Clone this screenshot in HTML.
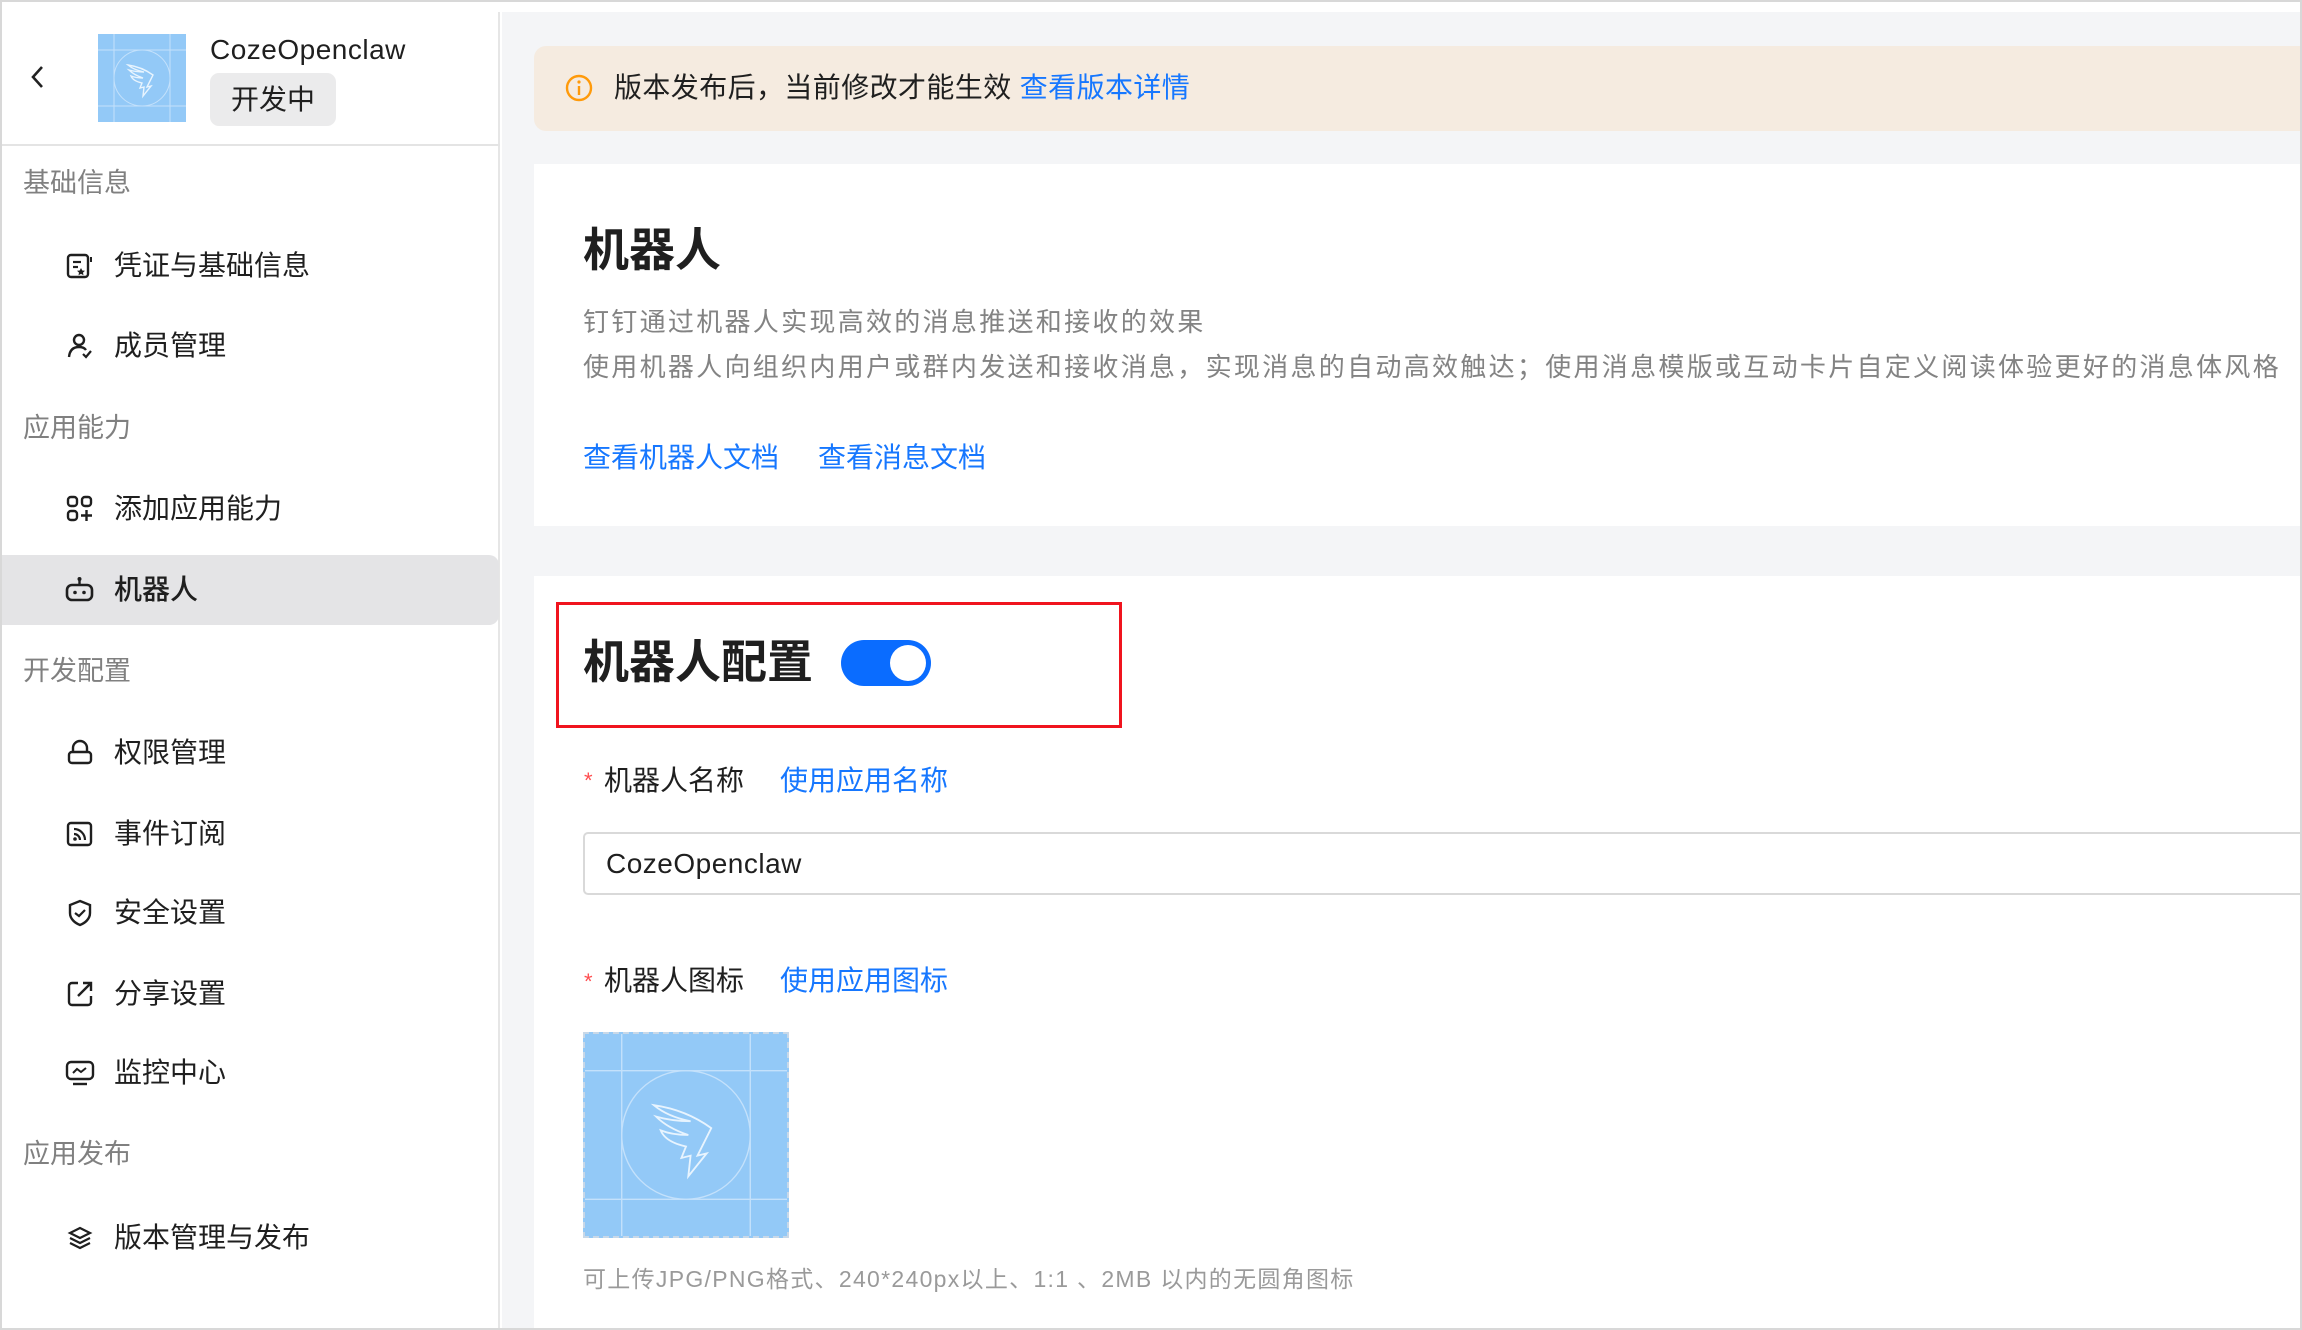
<!DOCTYPE html>
<html><head><meta charset="utf-8"><style>
*{margin:0;padding:0;box-sizing:border-box}
body{width:2302px;height:1330px;overflow:hidden;background:#fff;font-family:"Liberation Sans","Noto Sans CJK SC",sans-serif;position:relative;color:#1f1f1f}
.a{position:absolute;white-space:nowrap}
.frame{position:absolute;left:0;top:0;width:2302px;height:1330px;border:2px solid #d8d8d8;border-right-width:2px}
.side{position:absolute;left:2px;top:12px;width:498px;height:1316px;background:#fff;border-right:2px solid #e6e6e6}
.main{position:absolute;left:502px;top:12px;width:1798px;height:1316px;background:#f4f5f7;overflow:hidden}
.sec{position:absolute;left:21px;font-size:27px;color:#808080;line-height:1}
.it{position:absolute;left:112px;font-size:28px;color:#1f1f1f;line-height:1}
.ic{position:absolute;left:63px;width:30px;height:30px}
.blue{color:#1677ff}
</style></head><body>
<div class="frame"></div>
<div class="side">
  <svg class="a" style="left:26px;top:52px" width="20" height="26" viewBox="0 0 20 26"><path d="M14 3 L5 13 L14 23" fill="none" stroke="#222" stroke-width="2.6"/></svg>
  <div class="a" style="left:96px;top:22px;width:88px;height:88px;background:#93c9f7;overflow:hidden">
    <svg width="88" height="88" viewBox="0 0 88 88"><g stroke="#c4e1fb" stroke-width="1" fill="none"><line x1="16" y1="0" x2="16" y2="88"/><line x1="72" y1="0" x2="72" y2="88"/><line x1="0" y1="16" x2="88" y2="16"/><line x1="0" y1="72" x2="88" y2="72"/><circle cx="44" cy="44" r="28"/></g><path d="M30 31 Q44 33 55 41 L49 53 L53 52 L45 62 L46 53 L42 54 L44 49 Q35 47 33 42 Q38 44 45 44 Q36 41 31 36 Q38 38 46 38 Q36 36 30 31Z" fill="none" stroke="#e8f4fe" stroke-width="1.4"/></svg>
  </div>
  <div class="a" style="left:208px;top:22px;font-size:28px;color:#1f1f1f;letter-spacing:0.5px">CozeOpenclaw</div>
  <div class="a" style="left:208px;top:61px;width:126px;height:53px;background:#ebebec;border-radius:9px;font-size:28px;line-height:53px;text-align:center;color:#1f1f1f">开发中</div>
  <div class="a" style="left:0;top:132px;width:498px;height:2px;background:#e4e4e4"></div>

  <div class="sec" style="top:158px">基础信息</div>
  <svg class="ic" style="top:239px" viewBox="0 0 30 30"><rect x="3" y="4" width="20" height="22" rx="3" fill="none" stroke="#1f1f1f" stroke-width="2.4"/><line x1="8" y1="11" x2="16" y2="11" stroke="#1f1f1f" stroke-width="2.2"/><line x1="8" y1="16" x2="13" y2="16" stroke="#1f1f1f" stroke-width="2.2"/><path d="M16 17l1.3 2.5 2.7.3-2 1.8.5 2.6-2.5-1.3-2.5 1.3.5-2.6-2-1.8 2.7-.3z" fill="#1f1f1f"/><line x1="26" y1="6" x2="26" y2="11" stroke="#1f1f1f" stroke-width="2"/></svg>
  <div class="it" style="top:240px">凭证与基础信息</div>
  <svg class="ic" style="top:319px" viewBox="0 0 30 30"><circle cx="14" cy="9" r="5" fill="none" stroke="#1f1f1f" stroke-width="2.4"/><path d="M4 26 Q5 16 14 16 Q19 16 21 19" fill="none" stroke="#1f1f1f" stroke-width="2.4"/><path d="M18 23l3 3 5-6" fill="none" stroke="#1f1f1f" stroke-width="2.2"/></svg>
  <div class="it" style="top:320px">成员管理</div>

  <div class="sec" style="top:403px">应用能力</div>
  <svg class="ic" style="top:482px" viewBox="0 0 30 30"><rect x="3" y="3" width="9" height="9" rx="3" fill="none" stroke="#1f1f1f" stroke-width="2.4"/><rect x="17" y="3" width="9" height="9" rx="3" fill="none" stroke="#1f1f1f" stroke-width="2.4"/><rect x="3" y="17" width="9" height="9" rx="3" fill="none" stroke="#1f1f1f" stroke-width="2.4"/><path d="M21.5 16v11M16 21.5h11" stroke="#1f1f1f" stroke-width="2.4"/></svg>
  <div class="it" style="top:483px">添加应用能力</div>
  <div class="a" style="left:0;top:543px;width:497px;height:70px;background:#e4e4e6;border-radius:0 10px 10px 0"></div>
  <svg class="ic" style="top:563px" viewBox="0 0 30 30"><rect x="2" y="10" width="25" height="15" rx="5" fill="none" stroke="#1f1f1f" stroke-width="2.6"/><line x1="14.5" y1="4" x2="14.5" y2="10" stroke="#1f1f1f" stroke-width="2.4"/><circle cx="14.5" cy="4" r="2" fill="#1f1f1f"/><circle cx="10" cy="17.5" r="1.8" fill="#1f1f1f"/><circle cx="19" cy="17.5" r="1.8" fill="#1f1f1f"/></svg>
  <div class="it" style="top:564px;font-weight:500">机器人</div>

  <div class="sec" style="top:646px">开发配置</div>
  <svg class="ic" style="top:726px" viewBox="0 0 30 30"><path d="M8 14V10a7 7 0 0 1 14 0v4" fill="none" stroke="#1f1f1f" stroke-width="2.4"/><rect x="4" y="14" width="22" height="11" rx="3" fill="none" stroke="#1f1f1f" stroke-width="2.4"/></svg>
  <div class="it" style="top:727px">权限管理</div>
  <svg class="ic" style="top:807px" viewBox="0 0 30 30"><rect x="3" y="4" width="23" height="22" rx="3" fill="none" stroke="#1f1f1f" stroke-width="2.4"/><path d="M9 10a11 11 0 0 1 11 11M9 15a6 6 0 0 1 6 6" fill="none" stroke="#1f1f1f" stroke-width="2.2"/><circle cx="10" cy="20" r="1.8" fill="#1f1f1f"/></svg>
  <div class="it" style="top:808px">事件订阅</div>
  <svg class="ic" style="top:886px" viewBox="0 0 30 30"><path d="M15 3l10 4v8c0 6-5 10-10 12C10 25 5 21 5 15V7z" fill="none" stroke="#1f1f1f" stroke-width="2.4"/><path d="M10 15l4 3 6-6" fill="none" stroke="#1f1f1f" stroke-width="2.2"/></svg>
  <div class="it" style="top:887px">安全设置</div>
  <svg class="ic" style="top:967px" viewBox="0 0 30 30"><path d="M13 4H7a3 3 0 0 0-3 3v16a3 3 0 0 0 3 3h16a3 3 0 0 0 3-3v-6" fill="none" stroke="#1f1f1f" stroke-width="2.4"/><path d="M13 17L26 4M18 4h8v8" fill="none" stroke="#1f1f1f" stroke-width="2.4"/></svg>
  <div class="it" style="top:968px">分享设置</div>
  <svg class="ic" style="top:1046px" viewBox="0 0 30 30"><rect x="2" y="4" width="26" height="17" rx="4" fill="none" stroke="#1f1f1f" stroke-width="2.4"/><path d="M8 15l4-4 4 3 5-4" fill="none" stroke="#1f1f1f" stroke-width="2"/><line x1="8" y1="26" x2="22" y2="26" stroke="#1f1f1f" stroke-width="2.4"/></svg>
  <div class="it" style="top:1047px">监控中心</div>

  <div class="sec" style="top:1129px">应用发布</div>
  <svg class="ic" style="top:1211px" viewBox="0 0 30 30"><path d="M15 5l10 5-10 5-10-5z" fill="none" stroke="#1f1f1f" stroke-width="2.2"/><path d="M5 15l10 5 10-5M5 20l10 5 10-5" fill="none" stroke="#1f1f1f" stroke-width="2.2"/></svg>
  <div class="it" style="top:1212px">版本管理与发布</div>
</div>

<div class="main">
  <div class="a" style="left:32px;top:34px;width:1780px;height:85px;background:#f5ebe0;border-radius:12px"></div>
  <svg class="a" style="left:62px;top:61px" width="30" height="30" viewBox="0 0 30 30"><circle cx="15" cy="15" r="12" fill="none" stroke="#ff9a0a" stroke-width="2.4"/><line x1="15" y1="13" x2="15" y2="22" stroke="#ff9a0a" stroke-width="2.4"/><circle cx="15" cy="9" r="1.6" fill="#ff9a0a"/></svg>
  <div class="a" style="left:112px;top:59px;font-size:28px;line-height:34px;color:#1f1f1f;letter-spacing:0.4px">版本发布后，当前修改才能生效 <span class="blue">查看版本详情</span></div>

  <div class="a" style="left:32px;top:152px;width:1780px;height:362px;background:#fff"></div>
  <div class="a" style="left:81px;top:210px;font-size:46px;font-weight:bold;color:#1f1f1f;line-height:56px">机器人</div>
  <div class="a" style="left:81px;top:288px;font-size:26px;line-height:45px;color:#838383;letter-spacing:2.3px">钉钉通过机器人实现高效的消息推送和接收的效果<br>使用机器人向组织内用户或群内发送和接收消息，实现消息的自动高效触达；使用消息模版或互动卡片自定义阅读体验更好的消息体风格</div>
  <div class="a blue" style="left:81px;top:428px;font-size:28px;line-height:36px">查看机器人文档</div>
  <div class="a blue" style="left:316px;top:428px;font-size:28px;line-height:36px">查看消息文档</div>

  <div class="a" style="left:32px;top:564px;width:1780px;height:800px;background:#fff"></div>
  <div class="a" style="left:54px;top:590px;width:566px;height:126px;border:3px solid #f0141e"></div>
  <div class="a" style="left:81px;top:622px;font-size:46px;font-weight:bold;color:#1f1f1f;line-height:56px">机器人配置</div>
  <div class="a" style="left:339px;top:628px;width:90px;height:46px;border-radius:23px;background:#0a6cff"><div style="position:absolute;right:5px;top:5px;width:36px;height:36px;border-radius:50%;background:#fff"></div></div>

  <div class="a" style="left:82px;top:754px;font-size:22px;color:#ff4d4f;line-height:30px">*</div>
  <div class="a" style="left:102px;top:751px;font-size:28px;line-height:36px;color:#1f1f1f">机器人名称</div>
  <div class="a blue" style="left:278px;top:751px;font-size:28px;line-height:36px">使用应用名称</div>
  <div class="a" style="left:81px;top:820px;width:1740px;height:63px;border:2px solid #d9d9d9;border-radius:5px;background:#fff"></div>
  <div class="a" style="left:104px;top:834px;font-size:28px;line-height:36px;color:#1f1f1f;letter-spacing:0.5px">CozeOpenclaw</div>

  <div class="a" style="left:82px;top:955px;font-size:22px;color:#ff4d4f;line-height:30px">*</div>
  <div class="a" style="left:102px;top:951px;font-size:28px;line-height:36px;color:#1f1f1f">机器人图标</div>
  <div class="a blue" style="left:278px;top:951px;font-size:28px;line-height:36px">使用应用图标</div>
  <div class="a" style="left:81px;top:1020px;width:206px;height:206px;background:#93c9f7;border:2px dashed #c8d8e8;overflow:hidden">
    <svg width="202" height="202" viewBox="0 0 88 88"><g stroke="#c4e1fb" stroke-width="0.6" fill="none"><line x1="16" y1="0" x2="16" y2="88"/><line x1="72" y1="0" x2="72" y2="88"/><line x1="0" y1="16" x2="88" y2="16"/><line x1="0" y1="72" x2="88" y2="72"/><circle cx="44" cy="44" r="28"/></g><path d="M30 31 Q44 33 55 41 L49 53 L53 52 L45 62 L46 53 L42 54 L44 49 Q35 47 33 42 Q38 44 45 44 Q36 41 31 36 Q38 38 46 38 Q36 36 30 31Z" fill="none" stroke="#e8f4fe" stroke-width="0.8"/></svg>
  </div>
  <div class="a" style="left:81px;top:1252px;font-size:23px;line-height:30px;color:#9a9a9a;letter-spacing:1.3px">可上传JPG/PNG格式、240*240px以上、1:1 、2MB 以内的无圆角图标</div>
</div>
</body></html>
